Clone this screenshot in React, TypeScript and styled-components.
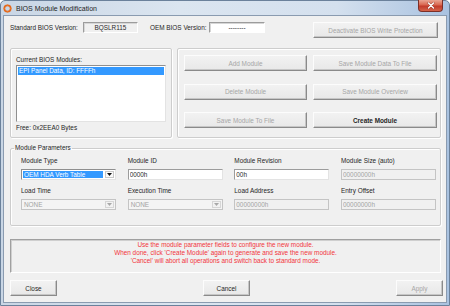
import styled, { createGlobalStyle } from "styled-components";

const FONT = `"Liberation Sans", Arial, sans-serif`;

const GlobalStyle = createGlobalStyle`
  html, body { margin: 0; padding: 0; background: #ffffff; }
  body { font-family: ${FONT}; }
  *, *::before, *::after { box-sizing: border-box; }
`;

const Window = styled.div`
  width: 450px;
  height: 306px;
  display: flex;
  flex-direction: column;
  padding: 0 2px 2px;
  border: 1px solid #6b819b;
  border-radius: 5px 5px 0 0;
  background: linear-gradient(to right, #c9d6e5 0%, #dbe5f0 40%, #d4e0ee 75%, #a9c2e0 100%);
  font-family: ${FONT};
  font-size: 6.4px;
  color: #1f1f1f;
`;

const TitleBar = styled.div`
  height: 14px;
  display: flex;
  align-items: center;
  gap: 4px;
`;

const Title = styled.span`
  font-size: 7px;
  color: #1e1e1e;
`;

const CloseX = styled.div`
  align-self: flex-start;
  margin: -1px 4px 0 auto;
  width: 25px;
  height: 12px;
  display: flex;
  align-items: center;
  justify-content: center;
  border: 1px solid #7d2f27;
  border-top: none;
  border-radius: 0 0 4px 4px;
  background: linear-gradient(#e9a593 0%, #d9664f 45%, #c23a2a 55%, #d4634a 100%);
`;

const Client = styled.div`
  flex: 1;
  display: flex;
  flex-direction: column;
  border: 1px solid #8a9bb0;
  background: #f0f0f0;
  padding: 6px 0 0 6px;
`;

const TopRow = styled.div`
  display: flex;
  align-items: flex-start;
  height: 16px;
`;

const Label = styled.span<{ $w?: number; $ml?: number }>`
  width: ${(p) => (p.$w ? `${p.$w}px` : "auto")};
  margin-left: ${(p) => p.$ml ?? 0}px;
  line-height: 11px;
  white-space: nowrap;
`;

const InfoBox = styled.div<{ $w: number; $white?: boolean }>`
  width: ${(p) => p.$w}px;
  height: 11px;
  line-height: 9px;
  text-align: center;
  background: ${(p) => (p.$white ? "#ffffff" : "#f0f0f0")};
  border: 1px solid;
  border-color: #9c9c9c #ffffff #ffffff #9c9c9c;
  box-shadow: inset 1px 1px 0 #d6d6d6;
  color: #2a2a2a;
`;

const Button = styled.button<{ $w?: number; $ml?: number; $strong?: boolean }>`
  width: ${(p) => (p.$w ? `${p.$w}px` : "auto")};
  margin-left: ${(p) => p.$ml ?? 0}px;
  height: 16px;
  padding: 0;
  font-family: ${FONT};
  font-size: 6.4px;
  font-weight: ${(p) => (p.$strong ? 700 : 400)};
  color: #262626;
  background: linear-gradient(#f2f2f2, #e8e8e8);
  border: 1px solid;
  border-color: #fcfcfc #8a8a8a #8a8a8a #fcfcfc;
  box-shadow: inset -1px -1px 0 #c6c6c6;
  border-radius: 0;
  &:disabled {
    color: #a6a6a6;
  }
`;

const GroupsRow = styled.div`
  display: flex;
  gap: 5px;
  height: 90px;
  margin-top: 10px;
`;

const Group = styled.div<{ $w: number }>`
  width: ${(p) => p.$w}px;
  border: 1px solid #cdcdcd;
  border-radius: 2px;
  box-shadow: inset 1px 1px 0 #ffffff, 1px 1px 0 #ffffff;
`;

const ModulesGroup = styled(Group)`
  padding: 6px 5px 0;
  display: flex;
  flex-direction: column;
`;

const GroupCaption = styled.div`
  line-height: 9px;
`;

const ListBox = styled.div`
  width: 150px;
  height: 57px;
  margin-top: 1px;
  padding: 1px;
  background: #ffffff;
  border: 1px solid;
  border-color: #8f8f8f #e3e3e3 #e3e3e3 #8f8f8f;
`;

const ListItem = styled.div<{ $selected?: boolean }>`
  height: 8px;
  line-height: 8px;
  padding-left: 1px;
  background: ${(p) => (p.$selected ? "#3399ff" : "transparent")};
  color: ${(p) => (p.$selected ? "#ffffff" : "#1f1f1f")};
`;

const FreeText = styled.div`
  margin-top: 2px;
  line-height: 8px;
`;

const ActionGroup = styled(Group)`
  padding: 6px 0 0 6px;
  display: grid;
  grid-template-columns: 123px 124px;
  grid-auto-rows: 16px;
  column-gap: 6px;
  row-gap: 12.5px;
  align-content: start;
`;

const ParamsSet = styled.fieldset`
  width: 431px;
  margin: 6px 0 0;
  padding: 4px 0 15px 10px;
  border: 1px solid #cdcdcd;
  border-radius: 2px;
  box-shadow: inset 1px 1px 0 #ffffff, 1px 1px 0 #ffffff;
  min-inline-size: 0;
`;

const Legend = styled.legend`
  margin-left: -7px;
  padding: 0 1px;
  line-height: 8px;
  font-size: 6.4px;
`;

const FieldGrid = styled.div`
  display: grid;
  grid-template-columns: repeat(4, 95px);
  column-gap: 11.67px;
  row-gap: 6px;
`;

const Field = styled.div`
  display: flex;
  flex-direction: column;
`;

const FieldLabel = styled.span`
  line-height: 9px;
  margin-bottom: 4px;
`;

const TextInput = styled.input`
  width: 95px;
  height: 11px;
  padding: 0 1px;
  margin: 0;
  font-family: ${FONT};
  font-size: 6.4px;
  color: #1f1f1f;
  background: #ffffff;
  border: 1px solid;
  border-color: #9c9c9c #e3e3e3 #e3e3e3 #9c9c9c;
  border-radius: 0;
  outline: none;
  &:disabled {
    color: #a3a3a3;
    background: #f0f0f0;
    border-color: #c4c4c4;
  }
`;

const SelectBox = styled.div<{ $disabled?: boolean }>`
  width: 95px;
  height: 11px;
  display: flex;
  padding: 1px;
  background: ${(p) => (p.$disabled ? "#f4f4f4" : "#ffffff")};
  border: 1px solid;
  border-color: ${(p) => (p.$disabled ? "#c4c4c4" : "#8f8f8f #e3e3e3 #e3e3e3 #8f8f8f")};
`;

const SelectValue = styled.div<{ $selected?: boolean }>`
  flex: 1;
  line-height: 7px;
  padding-left: 1px;
  background: ${(p) => (p.$selected ? "#3399ff" : "transparent")};
  color: ${(p) => (p.$selected ? "#ffffff" : "#a3a3a3")};
`;

const DropButton = styled.div<{ $disabled?: boolean }>`
  width: 9px;
  margin-left: 2px;
  display: flex;
  align-items: center;
  justify-content: center;
  border: 1px solid ${(p) => (p.$disabled ? "#d6d6d6" : "#c8c8c8")};
  background: ${(p) => (p.$disabled ? "#f2f2f2" : "#fafafa")};
`;

const MessageBox = styled.div`
  width: 431px;
  height: 34px;
  margin-top: 13px;
  padding-top: 1px;
  text-align: center;
  line-height: 8px;
  color: #f2353c;
  border: 1px solid;
  border-color: #a0a0a0 #ffffff #ffffff #a0a0a0;
  box-shadow: inset 1px 1px 0 #cfcfcf;
`;

const BottomRow = styled.div`
  width: 433px;
  margin-top: 7px;
  display: flex;
  justify-content: space-between;
`;

function AppIcon() {
  return (
    <svg width="9" height="9" viewBox="0 0 9 9">
      <circle cx="4.5" cy="4.5" r="3.2" fill="none" stroke="#e4681c" strokeWidth="1.7" />
      <path d="M4.5 0.3v1.2M4.5 7.5v1.2M0.3 4.5h1.2M7.5 4.5h1.2" stroke="#f08a3c" strokeWidth="0.9" />
    </svg>
  );
}

function CloseGlyph() {
  return (
    <svg width="8" height="7" viewBox="0 0 8 7">
      <path d="M1.5 1l5 5M6.5 1l-5 5" stroke="#5a1a14" strokeWidth="2.2" strokeLinecap="round" opacity="0.5" />
      <path d="M1.5 1l5 5M6.5 1l-5 5" stroke="#ffffff" strokeWidth="1.4" strokeLinecap="round" />
    </svg>
  );
}

function Arrow({ color }: { color: string }) {
  return (
    <svg width="5" height="3" viewBox="0 0 5 3">
      <polygon points="0,0 5,0 2.5,3" fill={color} />
    </svg>
  );
}

function Select({ value, disabled }: { value: string; disabled?: boolean }) {
  return (
    <SelectBox $disabled={disabled}>
      <SelectValue $selected={!disabled}>{value}</SelectValue>
      <DropButton $disabled={disabled}>
        <Arrow color={disabled ? "#a8a8a8" : "#111111"} />
      </DropButton>
    </SelectBox>
  );
}

export default function App() {
  return (
    <>
      <GlobalStyle />
      <Window>
        <TitleBar>
          <AppIcon />
          <Title>BIOS Module Modification</Title>
          <CloseX>
            <CloseGlyph />
          </CloseX>
        </TitleBar>
        <Client>
          <TopRow>
            <Label $w={73}>Standard BIOS Version:</Label>
            <InfoBox $w={55}>BQSLR115</InfoBox>
            <Label $w={59} $ml={12}>
              OEM BIOS Version:
            </Label>
            <InfoBox $w={56} $white>
              --------
            </InfoBox>
            <Button $w={125} $ml={48} disabled>
              Deactivate BIOS Write Protection
            </Button>
          </TopRow>

          <GroupsRow>
            <ModulesGroup $w={162}>
              <GroupCaption>Current BIOS Modules:</GroupCaption>
              <ListBox>
                <ListItem $selected>EPI Panel Data, ID: FFFFh</ListItem>
              </ListBox>
              <FreeText>Free: 0x2EEA0 Bytes</FreeText>
            </ModulesGroup>
            <ActionGroup $w={264}>
              <Button disabled>Add Module</Button>
              <Button disabled>Save Module Data To File</Button>
              <Button disabled>Delete Module</Button>
              <Button disabled>Save Module Overview</Button>
              <Button disabled>Save Module To File</Button>
              <Button $strong>Create Module</Button>
            </ActionGroup>
          </GroupsRow>

          <ParamsSet>
            <Legend>Module Parameters</Legend>
            <FieldGrid>
              <Field>
                <FieldLabel>Module Type</FieldLabel>
                <Select value="OEM HDA Verb Table" />
              </Field>
              <Field>
                <FieldLabel>Module ID</FieldLabel>
                <TextInput readOnly value="0000h" />
              </Field>
              <Field>
                <FieldLabel>Module Revision</FieldLabel>
                <TextInput readOnly value="00h" />
              </Field>
              <Field>
                <FieldLabel>Module Size (auto)</FieldLabel>
                <TextInput disabled value="00000000h" />
              </Field>
              <Field>
                <FieldLabel>Load Time</FieldLabel>
                <Select value="NONE" disabled />
              </Field>
              <Field>
                <FieldLabel>Execution Time</FieldLabel>
                <Select value="NONE" disabled />
              </Field>
              <Field>
                <FieldLabel>Load Address</FieldLabel>
                <TextInput disabled value="00000000h" />
              </Field>
              <Field>
                <FieldLabel>Entry Offset</FieldLabel>
                <TextInput disabled value="00000000h" />
              </Field>
            </FieldGrid>
          </ParamsSet>

          <MessageBox>
            Use the module parameter fields to configure the new module.
            <br />
            When done, click 'Create Module' again to generate and save the new module.
            <br />
            'Cancel' will abort all operations and switch back to standard mode.
          </MessageBox>

          <BottomRow>
            <Button $w={47}>Close</Button>
            <Button $w={47}>Cancel</Button>
            <Button $w={47} disabled>
              Apply
            </Button>
          </BottomRow>
        </Client>
      </Window>
    </>
  );
}
